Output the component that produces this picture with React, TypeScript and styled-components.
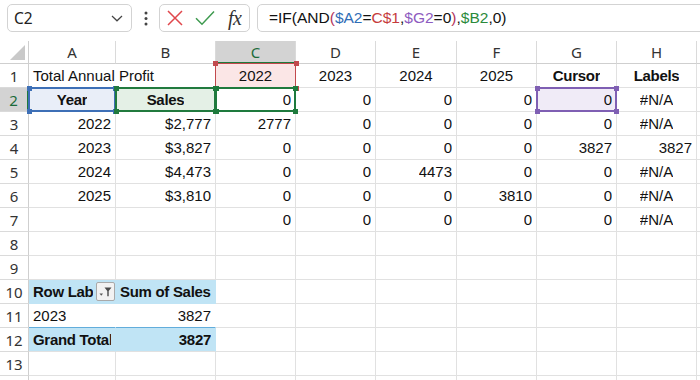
import React from 'react';
import styled, { createGlobalStyle, css } from 'styled-components';

type Align = 'l' | 'c' | 'r';
type MarkKind = 'red' | 'blue' | 'green' | 'active' | 'purple';
type Pivot = 'head' | 'body' | 'total';
type CellSpec = {
    v?: string
    al?: Align
    b?: boolean
    mark?: MarkKind
    spill?: boolean
    pv?: Pivot
    filter?: boolean
};

const COLS = ['A', 'B', 'C', 'D', 'E', 'F', 'G', 'H', 'I'];

const MARKS: Record<MarkKind, { line: string, fill: string, width: number }> = {
    red: {line: '#c2494d', fill: '#fbe6e6', width: 1},
    blue: {line: '#3d6fb6', fill: '#e9eef8', width: 2},
    green: {line: '#217a3e', fill: '#e4f0e6', width: 2},
    active: {line: '#1e7a3d', fill: '#ffffff', width: 2},
    purple: {line: '#7f5fb3', fill: '#f0ebf7', width: 2},
};

const PIVOT_BLUE = '#c0e4f5';

const n = (v: string): CellSpec => ({v, al: 'r'});
const na: CellSpec = {v: '#N/A', al: 'c'};
const empty: CellSpec = {};

const ROWS: CellSpec[][] = [
    [{v: 'Total Annual Profit', al: 'l', spill: true}, {}, {v: '2022', al: 'c', mark: 'red'},
        {v: '2023', al: 'c'}, {v: '2024', al: 'c'}, {v: '2025', al: 'c'},
        {v: 'Cursor', al: 'c', b: true}, {v: 'Labels', al: 'c', b: true}, empty],
    [{v: 'Year', al: 'c', b: true, mark: 'blue'}, {v: 'Sales', al: 'c', b: true, mark: 'green'},
        {v: '0', al: 'r', mark: 'active'}, n('0'), n('0'), n('0'), {v: '0', al: 'r', mark: 'purple'}, na, empty],
    [n('2022'), n('$2,777'), n('2777'), n('0'), n('0'), n('0'), n('0'), na, empty],
    [n('2023'), n('$3,827'), n('0'), n('0'), n('0'), n('0'), n('3827'), n('3827'), empty],
    [n('2024'), n('$4,473'), n('0'), n('0'), n('4473'), n('0'), n('0'), na, empty],
    [n('2025'), n('$3,810'), n('0'), n('0'), n('0'), n('3810'), n('0'), na, empty],
    [empty, empty, n('0'), n('0'), n('0'), n('0'), n('0'), na, empty],
    Array(9).fill(empty),
    Array(9).fill(empty),
    [{v: 'Row Labels', al: 'l', b: true, pv: 'head', filter: true}, {v: 'Sum of Sales', al: 'l', b: true, pv: 'head'},
        empty, empty, empty, empty, empty, empty, empty],
    [{v: '2023', al: 'l', pv: 'body'}, {v: '3827', al: 'r', pv: 'body'},
        empty, empty, empty, empty, empty, empty, empty],
    [{v: 'Grand Total', al: 'l', b: true, pv: 'total'}, {v: '3827', al: 'r', b: true, pv: 'total'},
        empty, empty, empty, empty, empty, empty, empty],
    Array(9).fill(empty),
    Array(9).fill(empty),
];

const GlobalStyle = createGlobalStyle`
  html, body {
    margin: 0;
    background: #ffffff;
    overflow: hidden;
  }
`;

const Page = styled.div`
  width: 700px;
  height: 380px;
  overflow: hidden;
  background: #ffffff;
  font-family: "Liberation Sans", Arial, sans-serif;
  color: #111;
`;

const TopBar = styled.div`
  display: flex;
  align-items: center;
  height: 41px;
  padding: 0 0 5px 7px;
  box-sizing: border-box;
`;

const boxLook = css`
  height: 28px;
  box-sizing: border-box;
  border: 1px solid #d3d3d3;
  border-radius: 5px;
  background: #fff;
`;

const NameBox = styled.div`
  ${boxLook};
  width: 125px;
  display: flex;
  align-items: center;
  justify-content: space-between;
  padding: 0 8px 0 6px;
  font-family: "Noto Sans", "Liberation Sans", sans-serif;
  font-size: 15.5px;
  color: #222;
`;

const MoreDots = styled.div`
  width: 27px;
  display: flex;
  justify-content: center;
  align-items: center;
`;

const ActionGroup = styled.div`
  ${boxLook};
  width: 91px;
  display: flex;
  align-items: center;
  padding-left: 7px;
  gap: 12px;
`;

const FxMark = styled.span`
  font-family: "Liberation Serif", "Times New Roman", serif;
  font-style: italic;
  font-size: 20px;
  color: #333;
  margin-left: 1px;
  line-height: 1;
  letter-spacing: -0.5px;
`;

const FormulaBox = styled.div`
  ${boxLook};
  flex: 1;
  margin-left: 7px;
  margin-right: -20px;
  display: flex;
  align-items: center;
  padding-left: 11px;
  font-size: 15.5px;
  white-space: pre;
  color: #111;
`;

const Ref = styled.span<{ $c: string }>`
  color: ${p => p.$c};
`;

const Sheet = styled.div`
  display: grid;
  grid-template-columns: 29px 87px 100px 80px 80px 81px 80px 80px 80px 80px;
  grid-template-rows: 23px;
  grid-auto-rows: 24px;
`;

const Corner = styled.div`
  box-sizing: border-box;
  border-right: 1px solid #cfcfcf;
  border-bottom: 1px solid #cfcfcf;
  display: flex;
  align-items: flex-end;
  justify-content: flex-end;
  padding: 0 2px 2px 0;
`;

const ColHead = styled.div<{ $active?: boolean }>`
  box-sizing: border-box;
  display: flex;
  align-items: center;
  justify-content: center;
  font-family: "Noto Sans", "Liberation Sans", sans-serif;
  font-size: 15px;
  color: ${p => p.$active ? '#1b6b3a' : '#333'};
  background: ${p => p.$active ? '#d3d3d3' : '#fff'};
  border-right: 1px solid #dadada;
  border-bottom: ${p => p.$active ? '2px solid #1e7a3d' : '1px solid #cfcfcf'};
`;

const RowHead = styled.div<{ $active?: boolean }>`
  box-sizing: border-box;
  display: flex;
  align-items: center;
  justify-content: center;
  font-family: "Noto Sans", "Liberation Sans", sans-serif;
  font-size: 15px;
  color: ${p => p.$active ? '#1b6b3a' : '#333'};
  background: ${p => p.$active ? '#d3d3d3' : '#fff'};
  border-bottom: 1px solid #dadada;
  border-right: ${p => p.$active ? '2px solid #1e7a3d' : '1px solid #cfcfcf'};
`;

const justify = {l: 'flex-start', c: 'center', r: 'flex-end'};

const pivotLook = (pv?: Pivot) => {
    if (pv === 'head') return css`
      background: ${PIVOT_BLUE};
      border-right-color: ${PIVOT_BLUE};
      border-bottom-color: ${PIVOT_BLUE};
    `;
    if (pv === 'body') return css`
      background: #fff;
      border-right-color: #fff;
      border-bottom-color: #62addb;
    `;
    if (pv === 'total') return css`
      background: ${PIVOT_BLUE};
      border-right-color: ${PIVOT_BLUE};
    `;
    return '';
};

const Cell = styled.div<{ $al: Align, $bold?: boolean, $bg?: string, $spill?: boolean, $pv?: Pivot, $tight?: boolean }>`
  position: relative;
  box-sizing: border-box;
  display: flex;
  align-items: center;
  justify-content: ${p => justify[p.$al]};
  padding: 0 ${p => p.$tight ? '0' : '4px'} 0 4px;
  min-width: 0;
  font-size: 15px;
  font-weight: ${p => p.$bold ? 700 : 400};
  letter-spacing: ${p => p.$bold ? '-0.3px' : 'normal'};
  background: ${p => p.$bg || 'transparent'};
  border-right: 1px solid ${p => p.$spill ? 'transparent' : '#e1e1e1'};
  border-bottom: 1px solid #e1e1e1;
  ${p => pivotLook(p.$pv)};
`;

const CellText = styled.span<{ $spill?: boolean }>`
  white-space: nowrap;
  min-width: 0;
  overflow: ${p => p.$spill ? 'visible' : 'hidden'};
  position: relative;
  z-index: 1;
`;

const PivotLabel = styled.span`
  flex: 1;
  min-width: 0;
  overflow: hidden;
  white-space: nowrap;
`;

const FilterButton = styled.span`
  width: 19px;
  height: 19px;
  flex-shrink: 0;
  box-sizing: border-box;
  border: 1px solid #a9a9a9;
  border-radius: 2px;
  background: #f2f2f2;
  display: flex;
  align-items: center;
  justify-content: center;
  margin-left: 3px;
`;

const RangeMark = styled.span<{ $c: string, $w: number }>`
  position: absolute;
  inset: -1px;
  border: ${p => p.$w}px solid ${p => p.$c};
  z-index: 2;
  pointer-events: none;
`;

const Handle = styled.span<{ $c: string, $v: 'top' | 'bottom', $h: 'left' | 'right' }>`
  position: absolute;
  width: 5px;
  height: 5px;
  background: ${p => p.$c};
  ${p => p.$v}: -3.5px;
  ${p => p.$h}: -3.5px;
`;

const Mark = ({kind}: { kind: MarkKind }) => {
    const m = MARKS[kind];
    return <RangeMark $c={m.line} $w={m.width}>
        <Handle $c={m.line} $v="top" $h="left"/>
        <Handle $c={m.line} $v="top" $h="right"/>
        <Handle $c={m.line} $v="bottom" $h="left"/>
        <Handle $c={m.line} $v="bottom" $h="right"/>
    </RangeMark>
};

const SheetCell = ({cell}: { cell: CellSpec }) => {
    const bg = cell.mark ? MARKS[cell.mark].fill : undefined;
    return <Cell $al={cell.al || 'l'} $bold={cell.b} $bg={bg} $spill={cell.spill} $pv={cell.pv} $tight={cell.filter}>
        {cell.filter
            ? <>
                <PivotLabel>{cell.v}</PivotLabel>
                <FilterButton>
                    <svg width="15" height="15" viewBox="0 0 15 15">
                        <path d="M1.5 9.5h3.5l-1.75 2.2z" fill="#555"/>
                        <path d="M6.5 3.5h7l-2.8 3.6v5.2h-1.4V7.1z" fill="#4a4a4a"/>
                    </svg>
                </FilterButton>
            </>
            : cell.v && <CellText $spill={cell.spill}>{cell.v}</CellText>}
        {cell.mark && <Mark kind={cell.mark}/>}
    </Cell>
};

export default function App() {
    return <Page>
        <GlobalStyle/>
        <TopBar>
            <NameBox>
                <span>C2</span>
                <svg width="12" height="7" viewBox="0 0 12 7">
                    <path d="M1 1l5 4.8L11 1" stroke="#444" strokeWidth="1.2" fill="none"/>
                </svg>
            </NameBox>
            <MoreDots>
                <svg width="4" height="15" viewBox="0 0 4 15">
                    <circle cx="2" cy="2" r="1.5" fill="#444"/>
                    <circle cx="2" cy="7.5" r="1.5" fill="#444"/>
                    <circle cx="2" cy="13" r="1.5" fill="#444"/>
                </svg>
            </MoreDots>
            <ActionGroup>
                <svg width="16" height="16" viewBox="0 0 16 16">
                    <path d="M1 1L15 15M15 1L1 15" stroke="#e0474c" strokeWidth="1.5" fill="none"/>
                </svg>
                <svg width="20" height="16" viewBox="0 0 20 16">
                    <path d="M1 8.2L7 14.2L19 1.5" stroke="#3e9a4f" strokeWidth="1.5" fill="none"/>
                </svg>
                <FxMark>fx</FxMark>
            </ActionGroup>
            <FormulaBox>
                =IF(AND<Ref $c="#b3335c">(</Ref><Ref $c="#2f6db6">$A2</Ref>=<Ref $c="#c63b3c">C$1</Ref>,
                <Ref $c="#8d5bc0">$G2</Ref>=0<Ref $c="#b3335c">)</Ref>,<Ref $c="#2b8a3b">$B2</Ref>,0)
            </FormulaBox>
        </TopBar>
        <Sheet>
            <Corner>
                <svg width="17" height="17" viewBox="0 0 17 17">
                    <path d="M16 1V16H1z" fill="#c9c9c9"/>
                </svg>
            </Corner>
            {COLS.map(c => <ColHead key={c} $active={c === 'C'}>{c}</ColHead>)}
            {ROWS.map((row, i) => (
                <React.Fragment key={i}>
                    <RowHead $active={i === 1}>{i + 1}</RowHead>
                    {row.map((cell, j) => <SheetCell key={j} cell={cell}/>)}
                </React.Fragment>
            ))}
        </Sheet>
    </Page>
}
